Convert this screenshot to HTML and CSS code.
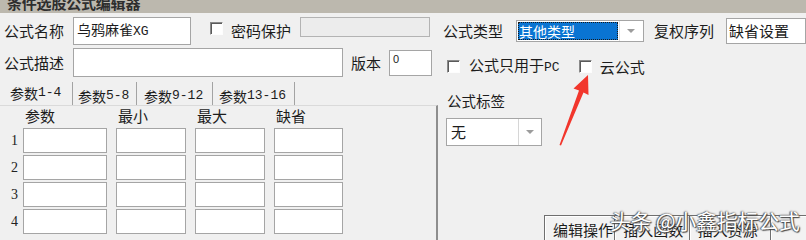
FILE: index.html
```html
<!DOCTYPE html>
<html lang="zh-CN">
<head>
<meta charset="utf-8">
<title>条件选股公式编辑器</title>
<link rel="stylesheet" href="styles.css">
</head>
<body>
<div class="titlebar"><span class="title">条件选股公式编辑器</span></div>
<div class="main">
  <div class="left">
    <div class="row r1">
      <span class="lbl">公式名称</span>
      <div class="input name">乌鸦麻雀<span class="latin">XG</span></div>
      <span class="chk pw-chk"></span>
      <span class="lbl pw-lbl">密码保护</span>
      <div class="input disabled"></div>
    </div>
    <div class="row r2">
      <span class="lbl">公式描述</span>
      <div class="input desc"></div>
      <span class="lbl ver-lbl">版本</span>
      <div class="input ver">0</div>
    </div>
    <div class="tabs">
      <div class="tab active">参数<span class="latin">1-4</span></div>
      <div class="tab t2">参数<span class="latin">5-8</span></div>
      <div class="tab t3">参数<span class="latin">9-12</span></div>
      <div class="tab t4">参数<span class="latin">13-16</span></div>
    </div>
    <div class="panel">
      <div class="grid">
        <span></span><span class="hd">参数</span><span class="hd">最小</span><span class="hd">最大</span><span class="hd">缺省</span>
        <span class="num">1</span><span class="cell"></span><span class="cell"></span><span class="cell"></span><span class="cell"></span>
        <span class="num">2</span><span class="cell"></span><span class="cell"></span><span class="cell"></span><span class="cell"></span>
        <span class="num">3</span><span class="cell"></span><span class="cell"></span><span class="cell"></span><span class="cell"></span>
        <span class="num">4</span><span class="cell"></span><span class="cell"></span><span class="cell"></span><span class="cell"></span>
      </div>
    </div>
  </div>
  <div class="right">
    <div class="rrow rr1">
      <span class="lbl">公式类型</span>
      <div class="combo type">
        <div class="val sel">其他类型</div>
        <div class="drop"><span class="tri"></span></div>
      </div>
      <span class="lbl fq-lbl">复权序列</span>
      <div class="input fq">缺省设置</div>
    </div>
    <div class="rrow rr2">
      <span class="chk pc-chk"></span>
      <span class="lbl pc-lbl">公式只用于<span class="latin">PC</span></span>
      <span class="chk cloud-chk"></span>
      <span class="lbl cloud-lbl">云公式</span>
    </div>
    <div class="tag-lbl">公式标签</div>
    <div class="combo tag">
      <div class="val">无</div>
      <div class="drop"><span class="tri"></span></div>
    </div>
    <div class="buttons">
      <div class="btn b1">编辑操作</div>
      <div class="btn b2">插入函数</div>
      <div class="btn b3">插入资源</div>
      <div class="btn b4"></div>
    </div>
  </div>
</div>
<div class="watermark">头条 @小鑫指标公式</div>
<svg class="arrow" width="806" height="240" viewBox="0 0 806 240">
  <polygon points="588,75 588.5,95 583.5,92.5 561,145.5 559.5,145 579,90.5 573.5,88.5" fill="#f2362c"/>
</svg>
</body>
</html>
```

FILE: styles.css
```css
* { box-sizing: border-box; margin: 0; padding: 0; }
html, body { width: 806px; height: 240px; overflow: hidden; }
body {
  background: #f0f0f0;
  font-family: "Noto Sans CJK SC", "Noto Sans", sans-serif;
  font-size: 15px;
  color: #1c1c1c;
  position: relative;
}
.latin { font-family: "Liberation Mono", monospace; font-size: 13px; }

.titlebar {
  height: 13px;
  background: #bcb8ae;
  overflow: hidden;
  padding-left: 7px;
}
.title {
  display: block;
  font-weight: bold;
  font-size: 15px;
  line-height: 15px;
  margin-top: -5px;
  color: #2e2e2e;
  letter-spacing: -0.2px;
}

.main { display: flex; }
.left { width: 438px; flex: none; }
.right { flex: 1; padding-left: 5px; min-width: 0; }

.row { display: flex; align-items: center; padding-left: 4px; }
.r1 { margin-top: 4px; height: 29px; align-items: flex-start; }
.r1 .lbl { margin-top: 5px; }
.r2 { margin-top: 2px; height: 29px; }
.lbl { line-height: 18px; white-space: nowrap; }

.input { background: #fff; border: 1px solid #a5a5a5; }
.name {
  margin-left: 9px; width: 118px; height: 28px;
  font-size: 14px; line-height: 16px; padding: 3px 3px;
}
.name .latin { font-size: 13px; }
.pw-chk { margin-left: 19px; margin-top: 5px; }
.pw-lbl { margin-left: 8px; }
.disabled {
  margin-left: 9px; width: 130px; height: 20px;
  background: #ececec; border-color: #b3b3b3;
}
.desc { margin-left: 9px; width: 270px; height: 29px; }
.ver-lbl { margin-left: 8px; }
.ver {
  margin-left: 8px; width: 43px; height: 26px;
  font-family: "Liberation Sans", sans-serif; font-size: 11px; line-height: 13px;
  padding: 2px 3px;
}

.chk {
  display: block; width: 13px; height: 13px; flex: none;
  background: #fff;
  border: 1px solid;
  border-color: #8a8a8a #fdfdfd #fdfdfd #8a8a8a;
  box-shadow: inset 1px 1px 0 #5a5a5a;
}

.tabs { display: flex; margin-top: 5px; height: 23px; padding-left: 4px; }
.tab {
  font-size: 14px; line-height: 18px;
  border-right: 1px solid #a3a3a3;
  display: flex; align-items: center;
  white-space: nowrap;
}
.tab .latin { font-size: 13px; }
.tab.active { width: 69px; padding-left: 6px; padding-bottom: 1px; }
.t2 { width: 64px; padding-left: 5px; padding-top: 4px; }
.t3 { width: 76px; padding-left: 7px; padding-top: 4px; }
.t4 { width: 82px; padding-left: 6px; padding-top: 4px; }

.panel {
  height: 135px;
  border-top: 1px solid #dadada;
  border-right: 2px solid #8e8e8e;
}
.grid {
  display: grid;
  grid-template-columns: 14px 84px 70px 70px 69px;
  grid-template-rows: 20px repeat(4, 25px);
  column-gap: 9px;
  row-gap: 2px;
}
.hd { padding-left: 2px; line-height: 20px; font-size: 15px; }
.num {
  font-family: "Liberation Serif", serif; font-size: 14px;
  line-height: 25px; padding-left: 11px; color: #222;
  white-space: nowrap;
}
.cell { background: #fff; border: 1px solid #a5a5a5; }

.rrow { display: flex; align-items: center; }
.rr1 { margin-top: 4px; height: 28px; }
.combo { display: flex; background: #fff; border: 1px solid #a5a5a5; }
.type { margin-left: 13px; width: 138px; height: 22px; }
.val { flex: 1; white-space: nowrap; }
.sel {
  margin: 1px;
  background: #0a74d2;
  outline: 1px dotted #1a1a1a;
  outline-offset: -1px;
  color: #fff;
  font-size: 14px; line-height: 18px;
  padding-left: 1px;
}
.drop {
  width: 24px; flex: none;
  border-left: 1px solid #e2e2e2;
  display: flex; align-items: center; justify-content: center;
}
.tri {
  width: 0; height: 0;
  border-left: 4px solid transparent;
  border-right: 4px solid transparent;
  border-top: 4px solid #9c9c9c;
}
.fq-lbl { margin-left: 10px; }
.fq {
  margin-left: 12px; width: 80px; height: 26px; flex: none;
  padding: 3px 2px; line-height: 18px;
}

.rr2 { margin-top: 7px; height: 29px; }
.pc-chk { margin-left: 4px; }
.pc-lbl { margin-left: 9px; }
.cloud-chk { margin-left: 19px; }
.cloud-lbl { margin-left: 8px; }

.tag-lbl { margin-top: 11px; margin-left: 4px; line-height: 18px; font-size: 14.5px; }
.tag { margin-top: 8px; margin-left: 3px; width: 96px; height: 28px; }
.tag .val { padding-left: 4px; line-height: 26px; font-size: 15px; }
.tag .drop { width: 23px; border-left-color: #d6d6d6; }

.buttons { display: flex; margin-top: 69px; margin-left: 101px; height: 30px; }
.btn {
  border: 1px solid #6f6f6f;
  border-right: none;
  background: #f2f2f2;
  box-shadow: inset 1px 1px 0 #ffffff;
  padding: 4px 0 0 8px;
  line-height: 20px;
  white-space: nowrap;
  font-size: 15px;
}
.b1 { width: 78px; }
.b2 { width: 83px; }
.b3 { width: 90px; }
.b4 { width: 40px; }

.watermark {
  position: absolute;
  left: 610px; top: 205px;
  font-size: 21px; line-height: 30px;
  color: #ffffff;
  white-space: nowrap;
  text-shadow: 0 0 2px #3a3a3a, 1px 1px 1px #4a4a4a, -1px 0 1px #666;
  letter-spacing: -0.3px;
}
.arrow { position: absolute; left: 0; top: 0; pointer-events: none; }
```
